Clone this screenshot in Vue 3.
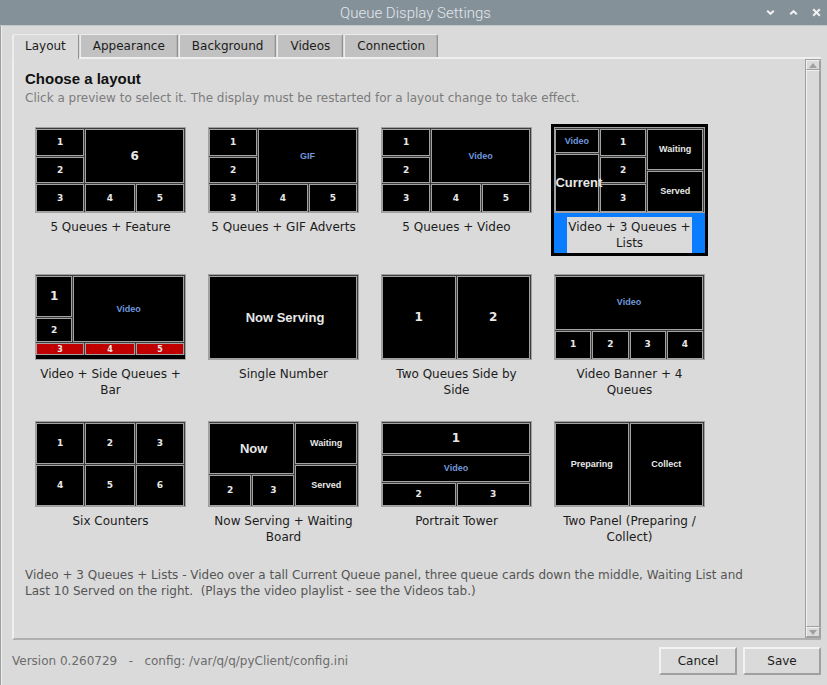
<script setup>
import { ref, computed } from 'vue';

const tabs = ['Layout', 'Appearance', 'Background', 'Videos', 'Connection'];
const activeTab = ref('Layout');
const selected = ref('video-lists');
const versionText = 'Version 0.260729   -   config: /var/q/q/pyClient/config.ini';

// Each cell: [left, top, right, bottom] in percent of the preview, label, kind
const layouts = [
  {
    id: 'feature',
    label: '5 Queues + Feature',
    cells: [
      [0, 0, 33, 33, '1'],
      [0, 33, 33, 66, '2'],
      [33, 0, 100, 66, '6', 'big'],
      [0, 66, 33, 100, '3'],
      [33, 66, 67, 100, '4'],
      [67, 66, 100, 100, '5'],
    ],
  },
  {
    id: 'gif',
    label: '5 Queues + GIF Adverts',
    cells: [
      [0, 0, 33, 33, '1'],
      [0, 33, 33, 66, '2'],
      [33, 0, 100, 66, 'GIF', 'media'],
      [0, 66, 33, 100, '3'],
      [33, 66, 67, 100, '4'],
      [67, 66, 100, 100, '5'],
    ],
  },
  {
    id: 'video',
    label: '5 Queues + Video',
    cells: [
      [0, 0, 33, 33, '1'],
      [0, 33, 33, 66, '2'],
      [33, 0, 100, 66, 'Video', 'media'],
      [0, 66, 33, 100, '3'],
      [33, 66, 67, 100, '4'],
      [67, 66, 100, 100, '5'],
    ],
  },
  {
    id: 'video-lists',
    label: 'Video + 3 Queues +\nLists',
    cells: [
      [0, 0, 30, 30, 'Video', 'media'],
      [0, 30, 30, 100, 'Current', 'title'],
      [30, 0, 62, 33, '1'],
      [30, 33, 62, 66, '2'],
      [30, 66, 62, 100, '3'],
      [62, 0, 100, 50, 'Waiting', 'word'],
      [62, 50, 100, 100, 'Served', 'word'],
    ],
  },
  {
    id: 'side-bar',
    label: 'Video + Side Queues +\nBar',
    cells: [
      [0, 0, 25, 50, '1', 'big'],
      [0, 50, 25, 80, '2'],
      [25, 0, 100, 80, 'Video', 'media'],
      [0, 80, 33, 95, '3', 'bar'],
      [33, 80, 67, 95, '4', 'bar'],
      [67, 80, 100, 95, '5', 'bar'],
      [0, 95, 100, 100, '', 'blank'],
    ],
  },
  {
    id: 'single',
    label: 'Single Number',
    cells: [[0, 0, 100, 100, 'Now Serving', 'title']],
  },
  {
    id: 'two',
    label: 'Two Queues Side by\nSide',
    cells: [
      [0, 0, 50, 100, '1', 'big'],
      [50, 0, 100, 100, '2', 'big'],
    ],
  },
  {
    id: 'banner',
    label: 'Video Banner + 4\nQueues',
    cells: [
      [0, 0, 100, 65, 'Video', 'media'],
      [0, 65, 25, 100, '1'],
      [25, 65, 50, 100, '2'],
      [50, 65, 75, 100, '3'],
      [75, 65, 100, 100, '4'],
    ],
  },
  {
    id: 'six',
    label: 'Six Counters',
    cells: [
      [0, 0, 33, 50, '1'],
      [33, 0, 67, 50, '2'],
      [67, 0, 100, 50, '3'],
      [0, 50, 33, 100, '4'],
      [33, 50, 67, 100, '5'],
      [67, 50, 100, 100, '6'],
    ],
  },
  {
    id: 'waiting-board',
    label: 'Now Serving + Waiting\nBoard',
    cells: [
      [0, 0, 58, 62, 'Now', 'title'],
      [0, 62, 29, 100, '2'],
      [29, 62, 58, 100, '3'],
      [58, 0, 100, 50, 'Waiting', 'word'],
      [58, 50, 100, 100, 'Served', 'word'],
    ],
  },
  {
    id: 'tower',
    label: 'Portrait Tower',
    cells: [
      [0, 0, 100, 38, '1', 'big'],
      [0, 38, 100, 72, 'Video', 'media'],
      [0, 72, 50, 100, '2'],
      [50, 72, 100, 100, '3'],
    ],
  },
  {
    id: 'two-panel',
    label: 'Two Panel (Preparing /\nCollect)',
    cells: [
      [0, 0, 50, 100, 'Preparing', 'word'],
      [50, 0, 100, 100, 'Collect', 'word'],
    ],
  },
];

const description = computed(() => {
  if (selected.value === 'video-lists') {
    return 'Video + 3 Queues + Lists - Video over a tall Current Queue panel, three queue cards down the middle, Waiting List and Last 10 Served on the right.  (Plays the video playlist - see the Videos tab.)';
  }
  return layouts.find((l) => l.id === selected.value).label.replace('\n', ' ');
});

const cellArea = ([left, top, right, bottom]) => ({
  gridArea: `${top + 1} / ${left + 1} / ${bottom + 1} / ${right + 1}`,
});
</script>

<template>
  <div class="window">
    <header class="titlebar">
      <h1 class="title">Queue Display Settings</h1>
      <div class="controls">
        <button type="button" aria-label="Minimize">
          <svg width="9" height="9" viewBox="0 0 9 9"><path d="M1.2 2.8 4.5 5.8 7.8 2.8" /></svg>
        </button>
        <button type="button" aria-label="Maximize">
          <svg width="9" height="9" viewBox="0 0 9 9"><path d="M1.2 6.2 4.5 3.2 7.8 6.2" /></svg>
        </button>
        <button type="button" aria-label="Close">
          <svg width="9" height="9" viewBox="0 0 9 9"><path d="M1.2 1.2 7.8 7.8M7.8 1.2 1.2 7.8" /></svg>
        </button>
      </div>
    </header>

    <div class="content">
      <nav class="tabs" role="tablist">
        <button
          v-for="tab in tabs"
          :key="tab"
          type="button"
          role="tab"
          class="tab"
          :class="{ active: tab === activeTab }"
          :aria-selected="tab === activeTab"
          @click="activeTab = tab"
        >{{ tab }}</button>
      </nav>

      <div class="pane">
        <main class="page">
          <h2 class="heading">Choose a layout</h2>
          <p class="hint">Click a preview to select it. The display must be restarted for a layout change to take effect.</p>

          <div class="gallery">
            <button
              v-for="layout in layouts"
              :key="layout.id"
              type="button"
              class="tile"
              :class="{ selected: layout.id === selected }"
              :aria-pressed="layout.id === selected"
              @click="selected = layout.id"
            >
              <span class="preview">
                <span
                  v-for="(cell, i) in layout.cells"
                  :key="i"
                  class="cell"
                  :class="cell[5]"
                  :style="cellArea(cell)"
                >{{ cell[4] }}</span>
              </span>
              <span class="caption">{{ layout.label }}</span>
            </button>
          </div>

          <p class="description">{{ description }}</p>
        </main>

        <div class="scrollbar">
          <button type="button" aria-label="Scroll up">
            <svg width="8" height="5" viewBox="0 0 8 5"><path d="M4 0 8 5H0z" /></svg>
          </button>
          <div class="thumb"></div>
          <button type="button" aria-label="Scroll down">
            <svg width="8" height="5" viewBox="0 0 8 5"><path d="M0 0H8L4 5z" /></svg>
          </button>
        </div>
      </div>

      <footer class="footer">
        <span class="version">{{ versionText }}</span>
        <button type="button" class="action">Cancel</button>
        <button type="button" class="action">Save</button>
      </footer>
    </div>
  </div>
</template>

<style>
body {
  margin: 0;
  background: #dadada;
}
</style>

<style scoped>
.window {
  min-height: 100vh;
  box-sizing: border-box;
  display: flex;
  flex-direction: column;
  background: #dadada;
  color: #1c1c1c;
  font: 12px/16px "DejaVu Sans", sans-serif;
}

button {
  font: inherit;
  color: inherit;
  padding: 0;
  border: 0;
  border-radius: 0;
  background: none;
}

.titlebar {
  height: 25px;
  display: grid;
  grid-template-columns: 1fr auto 1fr;
  align-items: center;
  background: #859199;
  border-bottom: 1px solid #c4c8ca;
}

.title {
  grid-column: 2;
  margin: 0;
  padding-left: 4px;
  font: 300 15px/24px Roboto, sans-serif;
  color: #e2e8ec;
}

.controls {
  display: flex;
  justify-content: flex-end;
  gap: 14px;
  padding-right: 6px;
}

.controls button {
  display: flex;
}

.controls svg {
  fill: none;
  stroke: #f0f2f3;
  stroke-width: 2;
}

.content {
  flex: 1;
  display: flex;
  flex-direction: column;
  padding: 8px 6px 10px 10px;
  border-left: 1px solid #9a9fa2;
  box-shadow: inset 1px 0 #ececec;
}

.tabs {
  display: flex;
  align-items: flex-end;
  gap: 1px;
  padding-left: 1px;
}

.tab {
  height: 23px;
  padding: 0 12px;
  background: #c1c1c1;
  border: 1px solid #ececec;
  border-right-color: #929292;
  border-bottom: 0;
  border-radius: 2px 2px 0 0;
  box-shadow: inset -1px 0 #b2b2b2;
}

.tab.active {
  height: 25px;
  margin-bottom: -2px;
  padding-bottom: 2px;
  background: #dadada;
  box-shadow: inset 1px 0 #ececec;
  z-index: 1;
}

.pane {
  flex: 1;
  display: flex;
  margin-left: 1px;
  border: 2px solid #efefef;
  border-right-width: 0;
  border-bottom-color: #b0b0b0;
}

.page {
  flex: 1;
  padding: 10px 11px 0;
}

.heading {
  margin: 0;
  font: bold 15px/20px "Liberation Sans", sans-serif;
  color: #111;
}

.hint {
  margin: 0;
  line-height: 18px;
  color: #7c7c7c;
}

.gallery {
  display: grid;
  grid-template-columns: repeat(4, 157px);
  gap: 15px 16px;
  padding: 17px 0 0 7px;
}

.tile {
  display: flex;
  flex-direction: column;
  align-items: center;
  justify-content: flex-start;
  height: 132px;
  box-sizing: border-box;
  border: 3px solid transparent;
}

.tile.selected {
  border-color: #000;
  background: #0a7cff;
}

.preview {
  display: grid;
  grid-template-columns: repeat(100, minmax(0, 1fr));
  grid-template-rows: repeat(100, minmax(0, 1fr));
  align-self: stretch;
  height: 86px;
  box-sizing: border-box;
  border: 1px solid #a0a0a0;
  background: #3c3c3c;
}

.cell {
  display: flex;
  align-items: center;
  justify-content: center;
  margin: 1px 1px 0 0;
  border: 1px solid #a2a2a2;
  background: #000;
  color: #e8e8e8;
  font: bold 9px/9px "DejaVu Sans", sans-serif;
  white-space: nowrap;
}

.cell.big {
  font-size: 12px;
}

.cell.word,
.cell.media {
  font-family: "Liberation Sans", sans-serif;
}

.cell.media {
  color: #6f97dc;
}

/* Long titles may run over the border of a narrow cell */
.cell.title {
  z-index: 1;
  font: bold 13px/14px "Liberation Sans", sans-serif;
}

.cell.bar {
  padding-top: 1px;
  background: #c00000;
  font-size: 8px;
}

.cell.blank {
  margin: 0;
  border: 0;
}

.caption {
  margin-top: 4px;
  padding: 2px 1px;
  background: #dadada;
  white-space: pre-line;
  text-align: center;
}

.description {
  margin: 17px 0 0;
  padding-right: 30px;
  color: #555;
  white-space: pre-wrap;
}

.scrollbar {
  width: 14px;
  display: flex;
  flex-direction: column;
  border: 1px solid #a0a0a0;
  background: #c8c8c8;
}

.scrollbar button,
.thumb {
  display: flex;
  align-items: center;
  justify-content: center;
  background: #dadada;
  border: 1px solid #f0f0f0;
  border-right-color: #a0a0a0;
  border-bottom-color: #a0a0a0;
}

.scrollbar button {
  height: 10px;
}

.scrollbar svg {
  fill: #a0a0a0;
}

.thumb {
  flex: 1;
}

.footer {
  display: flex;
  align-items: center;
  gap: 6px;
  padding: 7px 0 0 1px;
}

.version {
  flex: 1;
  color: #6c6c6c;
  white-space: pre;
}

.action {
  width: 78px;
  height: 28px;
  border: 2px solid #f2f2f2;
  border-right-color: #a0a0a0;
  border-bottom-color: #a0a0a0;
}
</style>
